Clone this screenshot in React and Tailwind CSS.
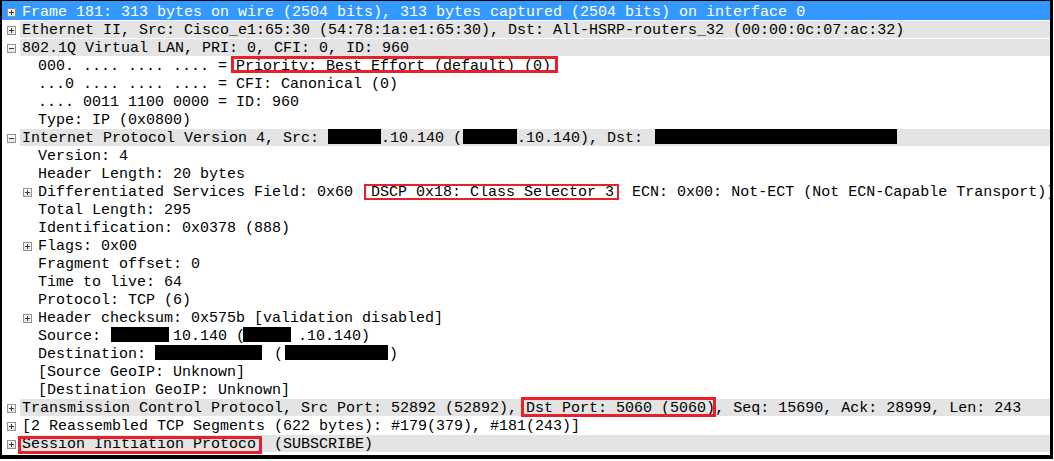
import React from "react";

const Exp = ({ open }) => (
  <svg width="9" height="9" viewBox="0 0 9 9" className="block">
    <defs>
      <linearGradient id="eg" x1="0" y1="0" x2="0" y2="1">
        <stop offset="0" stopColor="#ffffff" />
        <stop offset="1" stopColor="#e2e2e2" />
      </linearGradient>
    </defs>
    <rect x="0.5" y="0.5" width="8" height="8" fill="url(#eg)" stroke="#939393" />
    <path d="M2 4.5h5" stroke="#3a3a3a" />
    {!open && <path d="M4.5 2v5" stroke="#3a3a3a" />}
  </svg>
);

const Box = ({ cls, children }) => (
  <span className="relative inline-block h-[17px]">
    {children}
    <span className={`absolute border-[#e8202a] ${cls}`} />
  </span>
);

const Blk = ({ cls }) => <span className={`inline-block bg-black h-[15px] ${cls}`} />;

const T = ({ children, cls = "" }) => <span className={`whitespace-pre ${cls}`}>{children}</span>;

function Row({ level = 1, icon, gray, sel, children }) {
  return (
    <div
      className={`flex whitespace-nowrap ${sel ? "h-[19px] bg-[#3399ff] text-white pt-[1px]" : "h-[18px] text-black"} ${level === 0 ? "pl-[5px]" : "pl-[21px]"}`}
    >
      <div className="w-[9px] shrink-0 mr-[4px] pt-[6px]">
        {icon ? <Exp open={icon === "minus"} /> : null}
      </div>
      <div
        className={`flex flex-1 items-start mt-[1px] h-[17px] leading-[20px] pl-[2px] ${gray ? "bg-[#e4e4e4]" : ""}`}
      >
        {children}
      </div>
    </div>
  );
}

export default function App() {
  return (
    <div className="bg-white w-[1054px] h-[461px]">
      <div
        className="w-[1053px] border-black border-t border-l-2 border-r-[3px] border-b-4 overflow-hidden pb-[3px] text-[15px]"
        style={{ fontFamily: '"Liberation Mono", "DejaVu Sans Mono", monospace' }}
      >
        <Row level={0} icon="plus" sel>
          <T>Frame 181: 313 bytes on wire (2504 bits), 313 bytes captured (2504 bits) on interface 0</T>
        </Row>
        <Row level={0} icon="plus" gray>
          <T>Ethernet II, Src: Cisco_e1:65:30 (54:78:1a:e1:65:30), Dst: All-HSRP-routers_32 (00:00:0c:07:ac:32)</T>
        </Row>
        <Row level={0} icon="minus" gray>
          <T>802.1Q Virtual LAN, PRI: 0, CFI: 0, ID: 960</T>
        </Row>
        <Row>
          <T>000. .... .... .... = </T>
          <Box cls="border-[3px] -left-[5px] -right-[7px] -top-[1px] h-[17px]">
            <T>Priority: Best Effort (default) (0)</T>
          </Box>
        </Row>
        <Row>
          <T>...0 .... .... .... = CFI: Canonical (0)</T>
        </Row>
        <Row>
          <T>.... 0011 1100 0000 = ID: 960</T>
        </Row>
        <Row>
          <T>Type: IP (0x0800)</T>
        </Row>
        <Row level={0} icon="minus" gray>
          <T>Internet Protocol Version 4, Src: </T>
          <Blk cls="w-[53px]" />
          <T>.10.140 (</T>
          <Blk cls="ml-[1px] w-[54px]" />
          <T>.10.140), Dst: </T>
          <Blk cls="ml-[3px] w-[242px]" />
        </Row>
        <Row>
          <T>Version: 4</T>
        </Row>
        <Row>
          <T>Header Length: 20 bytes</T>
        </Row>
        <Row icon="plus">
          <T>Differentiated Services Field: 0x60 </T>
          <Box cls="border-[2px] left-[2px] right-[4px] top-[1px] h-[16px]">
            <T> DSCP 0x18: Class Selector 3 </T>
          </Box>
          <T> ECN: 0x00: Not-ECT (Not ECN-Capable Transport))</T>
        </Row>
        <Row>
          <T>Total Length: 295</T>
        </Row>
        <Row>
          <T>Identification: 0x0378 (888)</T>
        </Row>
        <Row icon="plus">
          <T>Flags: 0x00</T>
        </Row>
        <Row>
          <T>Fragment offset: 0</T>
        </Row>
        <Row>
          <T>Time to live: 64</T>
        </Row>
        <Row>
          <T>Protocol: TCP (6)</T>
        </Row>
        <Row icon="plus">
          <T>Header checksum: 0x575b [validation disabled]</T>
        </Row>
        <Row>
          <T>Source: </T>
          <Blk cls="ml-[1px] w-[58px]" />
          <T cls="ml-[4px]">10.140 (</T>
          <Blk cls="-ml-[2px] w-[48px]" />
          <T cls="ml-[7px]">.10.140)</T>
        </Row>
        <Row>
          <T>Destination: </T>
          <Blk cls="w-[107px]" />
          <T cls="ml-[3px]"> (</T>
          <Blk cls="ml-[2px] w-[103px]" />
          <T cls="ml-[1px]">)</T>
        </Row>
        <Row>
          <T>[Source GeoIP: Unknown]</T>
        </Row>
        <Row>
          <T>[Destination GeoIP: Unknown]</T>
        </Row>
        <Row level={0} icon="plus" gray>
          <T>Transmission Control Protocol, Src Port: 52892 (52892), </T>
          <Box cls="border-[3px] -left-[5px] -right-[1px] -top-[2px] h-[20px]">
            <T>Dst Port: 5060 (5060)</T>
          </Box>
          <T>, Seq: 15690, Ack: 28999, Len: 243</T>
        </Row>
        <Row level={0} icon="plus">
          <T>[2 Reassembled TCP Segments (622 bytes): #179(379), #181(243)]</T>
        </Row>
        <Row level={0} icon="plus" gray>
          <Box cls="border-[3px] -left-[4px] -right-[6px] top-[1px] h-[18px]">
            <T>Session Initiation Protoco</T>
          </Box>
          <T>{"  (SUBSCRIBE)"}</T>
        </Row>
      </div>
    </div>
  );
}
